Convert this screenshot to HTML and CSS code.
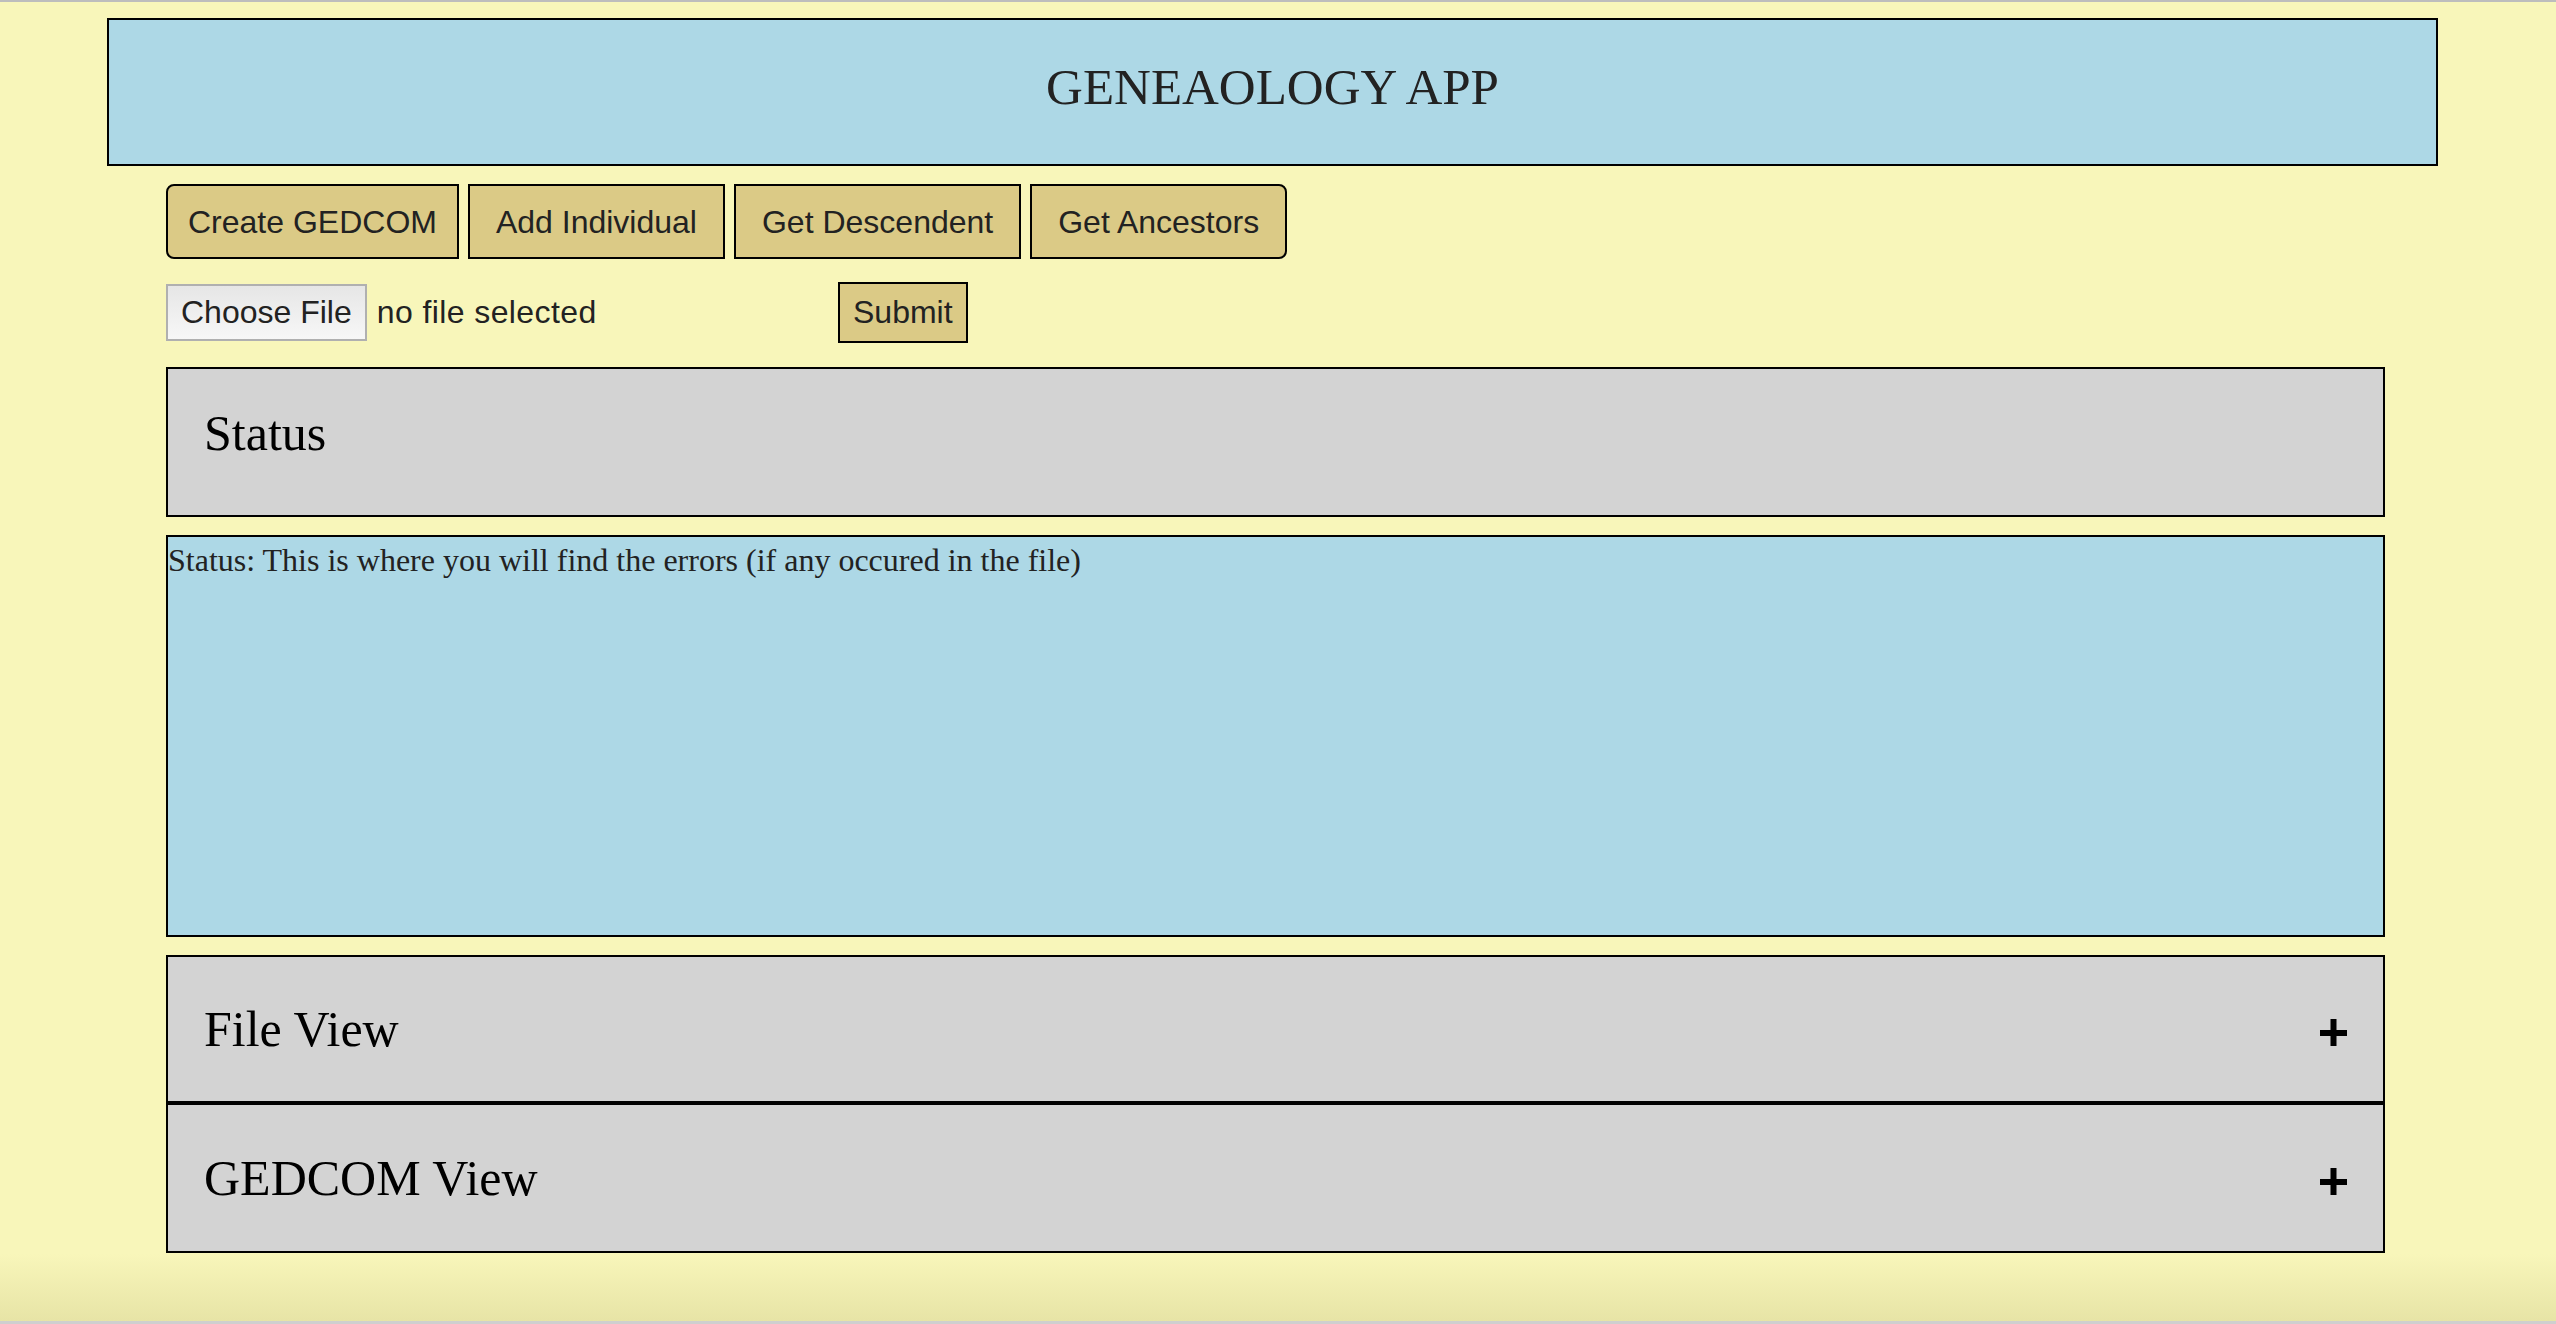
FILE: index.html
```html
<!DOCTYPE html>
<html lang="en">
<head>
  <meta charset="UTF-8"/>
  <title>Geneaology App</title>
  <meta name="viewport" content="width=device-width,initial-scale=1"/>
  <link rel="stylesheet" href="styles.css">
</head>
<body>

  <header class="title-bar">
    <h1>GENEAOLOGY APP</h1>
  </header>

  <main class="content">
    <div class="btn-group">
      <button class="btn">Create GEDCOM</button>
      <button class="btn">Add Individual</button>
      <button class="btn">Get Descendent</button>
      <button class="btn">Get Ancestors</button>
    </div>

    <form class="upload">
      <span class="file-pick">
        <button type="button" class="file-btn">Choose File</button>
        <span class="file-name">no file selected</span>
      </span>
      <button type="button" class="btn submit">Submit</button>
    </form>

    <section class="panel-head status-head">
      <h2>Status</h2>
    </section>
    <div class="status-box">Status: This is where you will find the errors (if any occured in the file)</div>

    <section class="panel-head">
      <h2>File View</h2>
      <svg class="plus" width="27" height="27" viewBox="0 0 27 27"><rect x="0" y="11" width="27" height="6"/><rect x="10.5" y="0" width="6" height="27"/></svg>
    </section>
    <section class="panel-head tall">
      <h2>GEDCOM View</h2>
      <svg class="plus" width="27" height="27" viewBox="0 0 27 27"><rect x="0" y="11" width="27" height="6"/><rect x="10.5" y="0" width="6" height="27"/></svg>
    </section>
  </main>

</body>
</html>
```

FILE: styles.css
```css
html,body{margin:0;}
body{min-height:100vh;box-sizing:border-box;border-top:2px solid #bdbdbd;font-family:'Liberation Serif',serif;color:#222;
  background:linear-gradient(to bottom,#f8f6ba 0,#f8f6ba calc(100% - 70px),#e7e4a6 calc(100% - 3px),#cfcfcf calc(100% - 3px));}
.title-bar{margin:16px 118px 0 107px;height:148px;box-sizing:border-box;border:2px solid #000;background:#add8e6;display:flex;align-items:center;justify-content:center;padding-bottom:10px;}
.title-bar h1{margin:0;font-size:51px;font-weight:normal;color:#222;}
.content{margin:0 171px 0 166px;}
.btn-group{display:flex;gap:9px;margin-top:18px;}
.btn{font-family:'Liberation Sans',Arial,sans-serif;font-size:32px;line-height:47px;padding:13px 26px 11px;color:#222;background:#dbca86;border:2px solid #000;border-radius:0;cursor:pointer;}
.btn-group .btn:first-child{border-radius:8px 0 0 8px;padding:13px 20px 11px;}
.btn-group .btn:last-child{border-radius:0 8px 8px 0;}
.upload{display:flex;align-items:center;margin-top:23px;}
.file-pick{display:flex;align-items:center;width:672px;}
.file-btn{font-family:'Liberation Sans',Arial,sans-serif;font-size:32px;height:57px;padding:0 13px;color:#222;background:linear-gradient(#e6e6e6,#f7f7f7);border:2px solid #b0b0b0;border-radius:0;}
.file-name{margin-left:10px;font-family:'Liberation Sans',Arial,sans-serif;font-size:32px;letter-spacing:.4px;color:#222;}
.submit{height:61px;line-height:57px;padding:0 13px;}
.panel-head{display:flex;align-items:center;justify-content:space-between;height:148px;box-sizing:border-box;border:2px solid #000;background:#d3d3d3;padding:0 36px;margin-top:18px;}
.panel-head h2{margin:0;font-size:50px;font-weight:normal;color:#000;}
.panel-head.tall{height:150px;margin-top:0;}
.status-head{height:150px;margin-top:24px;padding-bottom:18px;}
.status-box{margin-top:18px;height:402px;box-sizing:border-box;border:2px solid #000;background:#add8e6;font-size:32px;line-height:46px;color:#222;}
.plus{fill:#000;margin-top:6px;}
```
